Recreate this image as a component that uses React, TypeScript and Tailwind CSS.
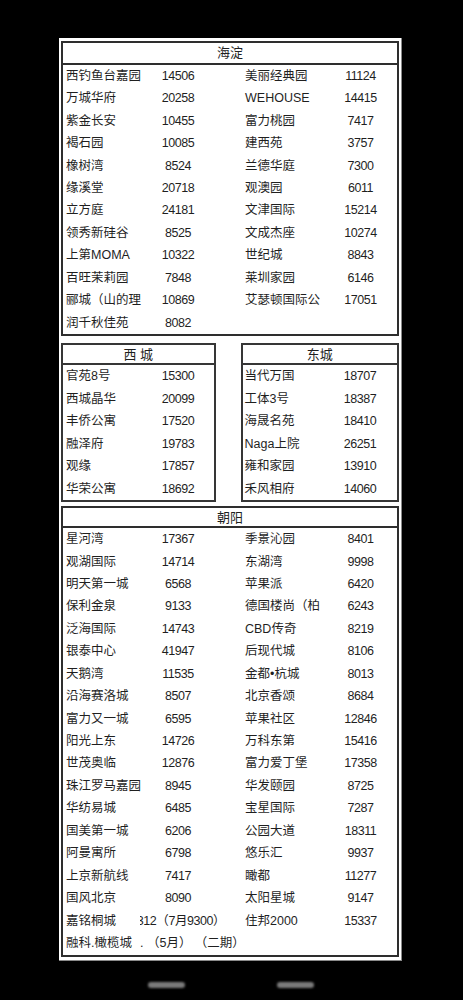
import React from "react";

type Row = [string, React.ReactNode, string?, string?];

const haidian: Row[] = [
  ["西钓鱼台嘉园", "14506", "美丽经典园", "11124"],
  ["万城华府", "20258", "WEHOUSE", "14415"],
  ["紫金长安", "10455", "富力桃园", "7417"],
  ["褐石园", "10085", "建西苑", "3757"],
  ["橡树湾", "8524", "兰德华庭", "7300"],
  ["缘溪堂", "20718", "观澳园", "6011"],
  ["立方庭", "24181", "文津国际", "15214"],
  ["领秀新硅谷", "8525", "文成杰座", "10274"],
  ["上第MOMA", "10322", "世纪城", "8843"],
  ["百旺茉莉园", "7848", "莱圳家园", "6146"],
  ["郦城（山的理", "10869", "艾瑟顿国际公", "17051"],
  ["润千秋佳苑", "8082"],
];

const xicheng: [string, string][] = [
  ["官苑8号", "15300"],
  ["西城晶华", "20099"],
  ["丰侨公寓", "17520"],
  ["融泽府", "19783"],
  ["观缘", "17857"],
  ["华荣公寓", "18692"],
];

const dongcheng: [string, string][] = [
  ["当代万国", "18707"],
  ["工体3号", "18387"],
  ["海晟名苑", "18410"],
  ["Naga上院", "26251"],
  ["雍和家园", "13910"],
  ["禾风相府", "14060"],
];

const chaoyang: Row[] = [
  ["星河湾", "17367", "季景沁园", "8401"],
  ["观湖国际", "14714", "东湖湾", "9998"],
  ["明天第一城", "6568", "苹果派", "6420"],
  ["保利金泉", "9133", "德国楼尚（柏", "6243"],
  ["泛海国际", "14743", "CBD传奇", "8219"],
  ["银泰中心", "41947", "后现代城", "8106"],
  ["天鹅湾", "11535", "金都•杭城", "8013"],
  ["沿海赛洛城", "8507", "北京香颂", "8684"],
  ["富力又一城", "6595", "苹果社区", "12846"],
  ["阳光上东", "14726", "万科东第", "15416"],
  ["世茂奥临", "12876", "富力爱丁堡", "17358"],
  ["珠江罗马嘉园", "8945", "华发颐园", "8725"],
  ["华纺易城", "6485", "宝星国际", "7287"],
  ["国美第一城", "6206", "公园大道", "18311"],
  ["阿曼寓所", "6798", "悠乐汇", "9937"],
  ["上京新航线", "7417", "瞰都", "11277"],
  ["国风北京", "8090", "太阳星城", "9147"],
  ["嘉铭桐城", "clip1", "住邦2000", "15337"],
  ["融科.橄榄城", "clip2"],
];

const font = {
  fontFamily: '"Liberation Sans", "Noto Sans CJK SC", sans-serif',
};

const numCls = "text-center text-[12.5px] tracking-[-0.45px]";

function NumCell({ v }: { v: React.ReactNode }) {
  if (v === "clip1") {
    return (
      <div className="relative h-full w-[64px]">
        <div className="absolute left-[-6px] top-0 flex h-full w-[85px] items-center justify-end overflow-hidden whitespace-nowrap text-[12.5px] tracking-[-0.45px]">
          <span>9312（7月9300）</span>
        </div>
      </div>
    );
  }
  if (v === "clip2") {
    return (
      <div className="relative h-full w-[64px]">
        <div className="absolute left-[-6px] top-0 flex h-full w-[120px] items-center whitespace-nowrap text-[12.5px]">
          <span>.&nbsp;（5月）&nbsp;（二期）</span>
        </div>
      </div>
    );
  }
  return <div className={`w-[64px] ${numCls}`}>{v}</div>;
}

function FourColRow({ r }: { r: Row }) {
  return (
    <div className="flex h-[22.45px] items-center">
      <div className="w-[83px] whitespace-nowrap pl-[3px]">{r[0]}</div>
      <NumCell v={r[1]} />
      <div className="w-[123px] whitespace-nowrap pl-[35px]">{r[2] ?? ""}</div>
      <div className={`w-[55px] ${numCls}`}>{r[3] ?? ""}</div>
    </div>
  );
}

export default function App() {
  return (
    <div className="min-h-[1000px] bg-black pt-[38px]" style={font}>
      <div className="ml-[59px] w-[343px] border-r border-b border-[#8a8a8a] bg-white px-[2px] pb-[3px] pt-[3px] text-[12.5px] text-[#1f1f1f]">
        {/* 海淀 */}
        <div className="border-2 border-[#2e2e2e]">
          <div className="flex h-[22px] items-center justify-center border-b-2 border-[#2e2e2e] text-[13px]">
            海淀
          </div>
          {haidian.map((r, i) => (
            <FourColRow key={i} r={r} />
          ))}
        </div>

        {/* 西城 / 东城 */}
        <div className="mt-[7px] flex gap-[25px]">
          <div className="w-[155px] border-2 border-[#363636]">
            <div className="flex h-[20px] items-center justify-center border-b-2 border-[#363636] text-[13px]">
              西&nbsp;城
            </div>
            {xicheng.map(([n, v], i) => (
              <div key={i} className="flex h-[22.5px] items-center">
                <div className="w-[83px] whitespace-nowrap pl-[3px]">{n}</div>
                <div className={`w-[64px] ${numCls}`}>{v}</div>
              </div>
            ))}
          </div>
          <div className="w-[159px] border-2 border-[#363636]">
            <div className="flex h-[20px] items-center justify-center border-b-2 border-[#363636] text-[13px]">
              东城
            </div>
            {dongcheng.map(([n, v], i) => (
              <div key={i} className="flex h-[22.5px] items-center">
                <div className="w-[90px] whitespace-nowrap pl-[2px]">{n}</div>
                <div className={`w-[55px] ${numCls}`}>{v}</div>
              </div>
            ))}
          </div>
        </div>

        {/* 朝阳 */}
        <div className="mt-[4px] border-2 border-[#2e2e2e]">
          <div className="flex h-[20px] items-center justify-center border-b-2 border-[#2e2e2e] text-[13px]">
            朝阳
          </div>
          {chaoyang.map((r, i) => (
            <FourColRow key={i} r={r} />
          ))}
        </div>
      </div>

      <div className="ml-[148px] mt-[21px] flex gap-[92px]">
        <div className="h-[6px] w-[37px] rounded-full bg-[#7a7a7a] blur-[1px]" />
        <div className="h-[6px] w-[37px] rounded-full bg-[#7a7a7a] blur-[1px]" />
      </div>
    </div>
  );
}
